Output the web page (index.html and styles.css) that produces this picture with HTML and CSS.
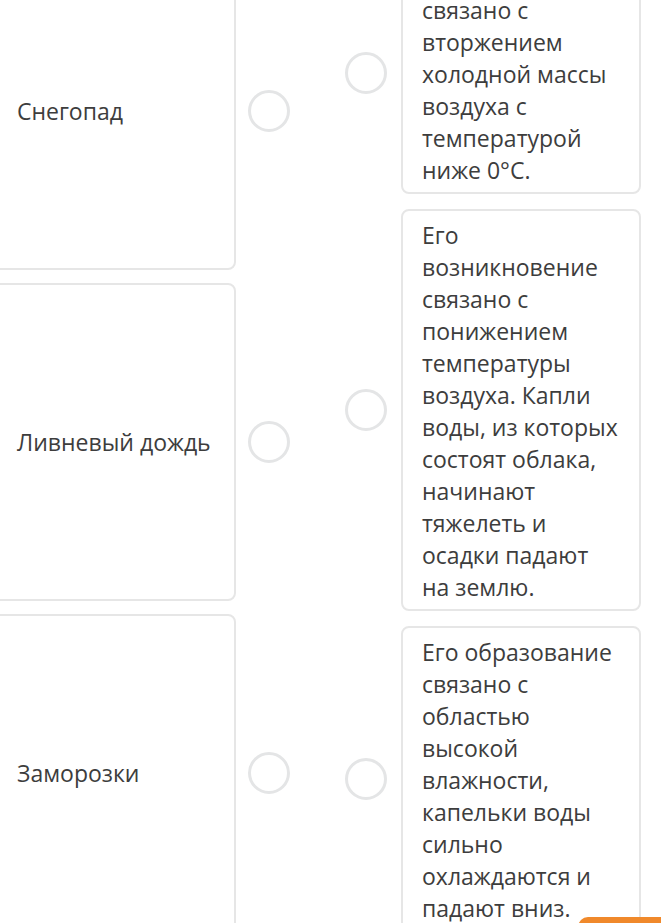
FILE: index.html
```html
<!DOCTYPE html>
<html lang="ru">
<head>
    <meta charset="UTF-8">
    <meta name="viewport" content="width=device-width, initial-scale=1.0">
    <title>Соотнесите</title>
    <link rel="stylesheet" href="styles.css">
</head>
<body>

    <div class="match">
        <div class="column left">
            <div class="item">
                <div class="card term">Снегопад</div>
                <span class="dot"></span>
            </div>
            <div class="item">
                <div class="card term">Ливневый дождь</div>
                <span class="dot"></span>
            </div>
            <div class="item">
                <div class="card term">Заморозки</div>
                <span class="dot"></span>
            </div>
        </div>

        <div class="column right">
            <div class="item">
                <span class="dot"></span>
                <div class="card answer">Его появление связано с вторжением холодной массы воздуха с температурой ниже 0°С.</div>
            </div>
            <div class="item">
                <span class="dot"></span>
                <div class="card answer">Его возникновение связано с понижением температуры воздуха. Капли воды, из которых состоят облака, начинают тяжелеть и осадки падают на землю.</div>
            </div>
            <div class="item">
                <span class="dot"></span>
                <div class="card answer">Его образование связано с областью высокой влажности, капельки воды сильно охлаждаются и падают вниз.</div>
            </div>
        </div>
    </div>

    <div class="next-btn"></div>

</body>
</html>
```

FILE: styles.css
```css
body {
    font-family: "Open Sans", Arial, sans-serif;
    background: #fff;
    color: #3d3d3d;
    margin: 0;
    overflow: hidden;
}
.match {
    display: flex;
    align-items: flex-start;
}
.column {
    display: flex;
    flex-direction: column;
    gap: 13px;
}
.column.left {
    margin-top: -48px;
    margin-left: -20px;
}
.column.right {
    margin-top: -48px;
    margin-left: 55px;
    gap: 15px;
}
.item {
    display: flex;
    align-items: center;
}
.card {
    background: #fff;
    border: 2px solid #e6e6e6;
    border-radius: 8px;
    box-sizing: border-box;
    font-size: 23px;
    line-height: 32px;
}
.term {
    width: 256px;
    height: 318px;
    padding-left: 35px;
    display: flex;
    align-items: center;
}
.answer {
    width: 240px;
    padding: 8px 19px 6px 19px;
}
.dot {
    width: 42px;
    height: 42px;
    border: 3px solid #e4e5e6;
    border-radius: 50%;
    box-sizing: border-box;
    flex-shrink: 0;
}
.left .dot {
    margin-left: 12px;
}
.right .dot {
    margin-right: 14px;
}
.next-btn {
    position: absolute;
    left: 578px;
    top: 917px;
    width: 100px;
    height: 40px;
    background: #f0892b;
    border-radius: 10px 0 0 0;
}
```
